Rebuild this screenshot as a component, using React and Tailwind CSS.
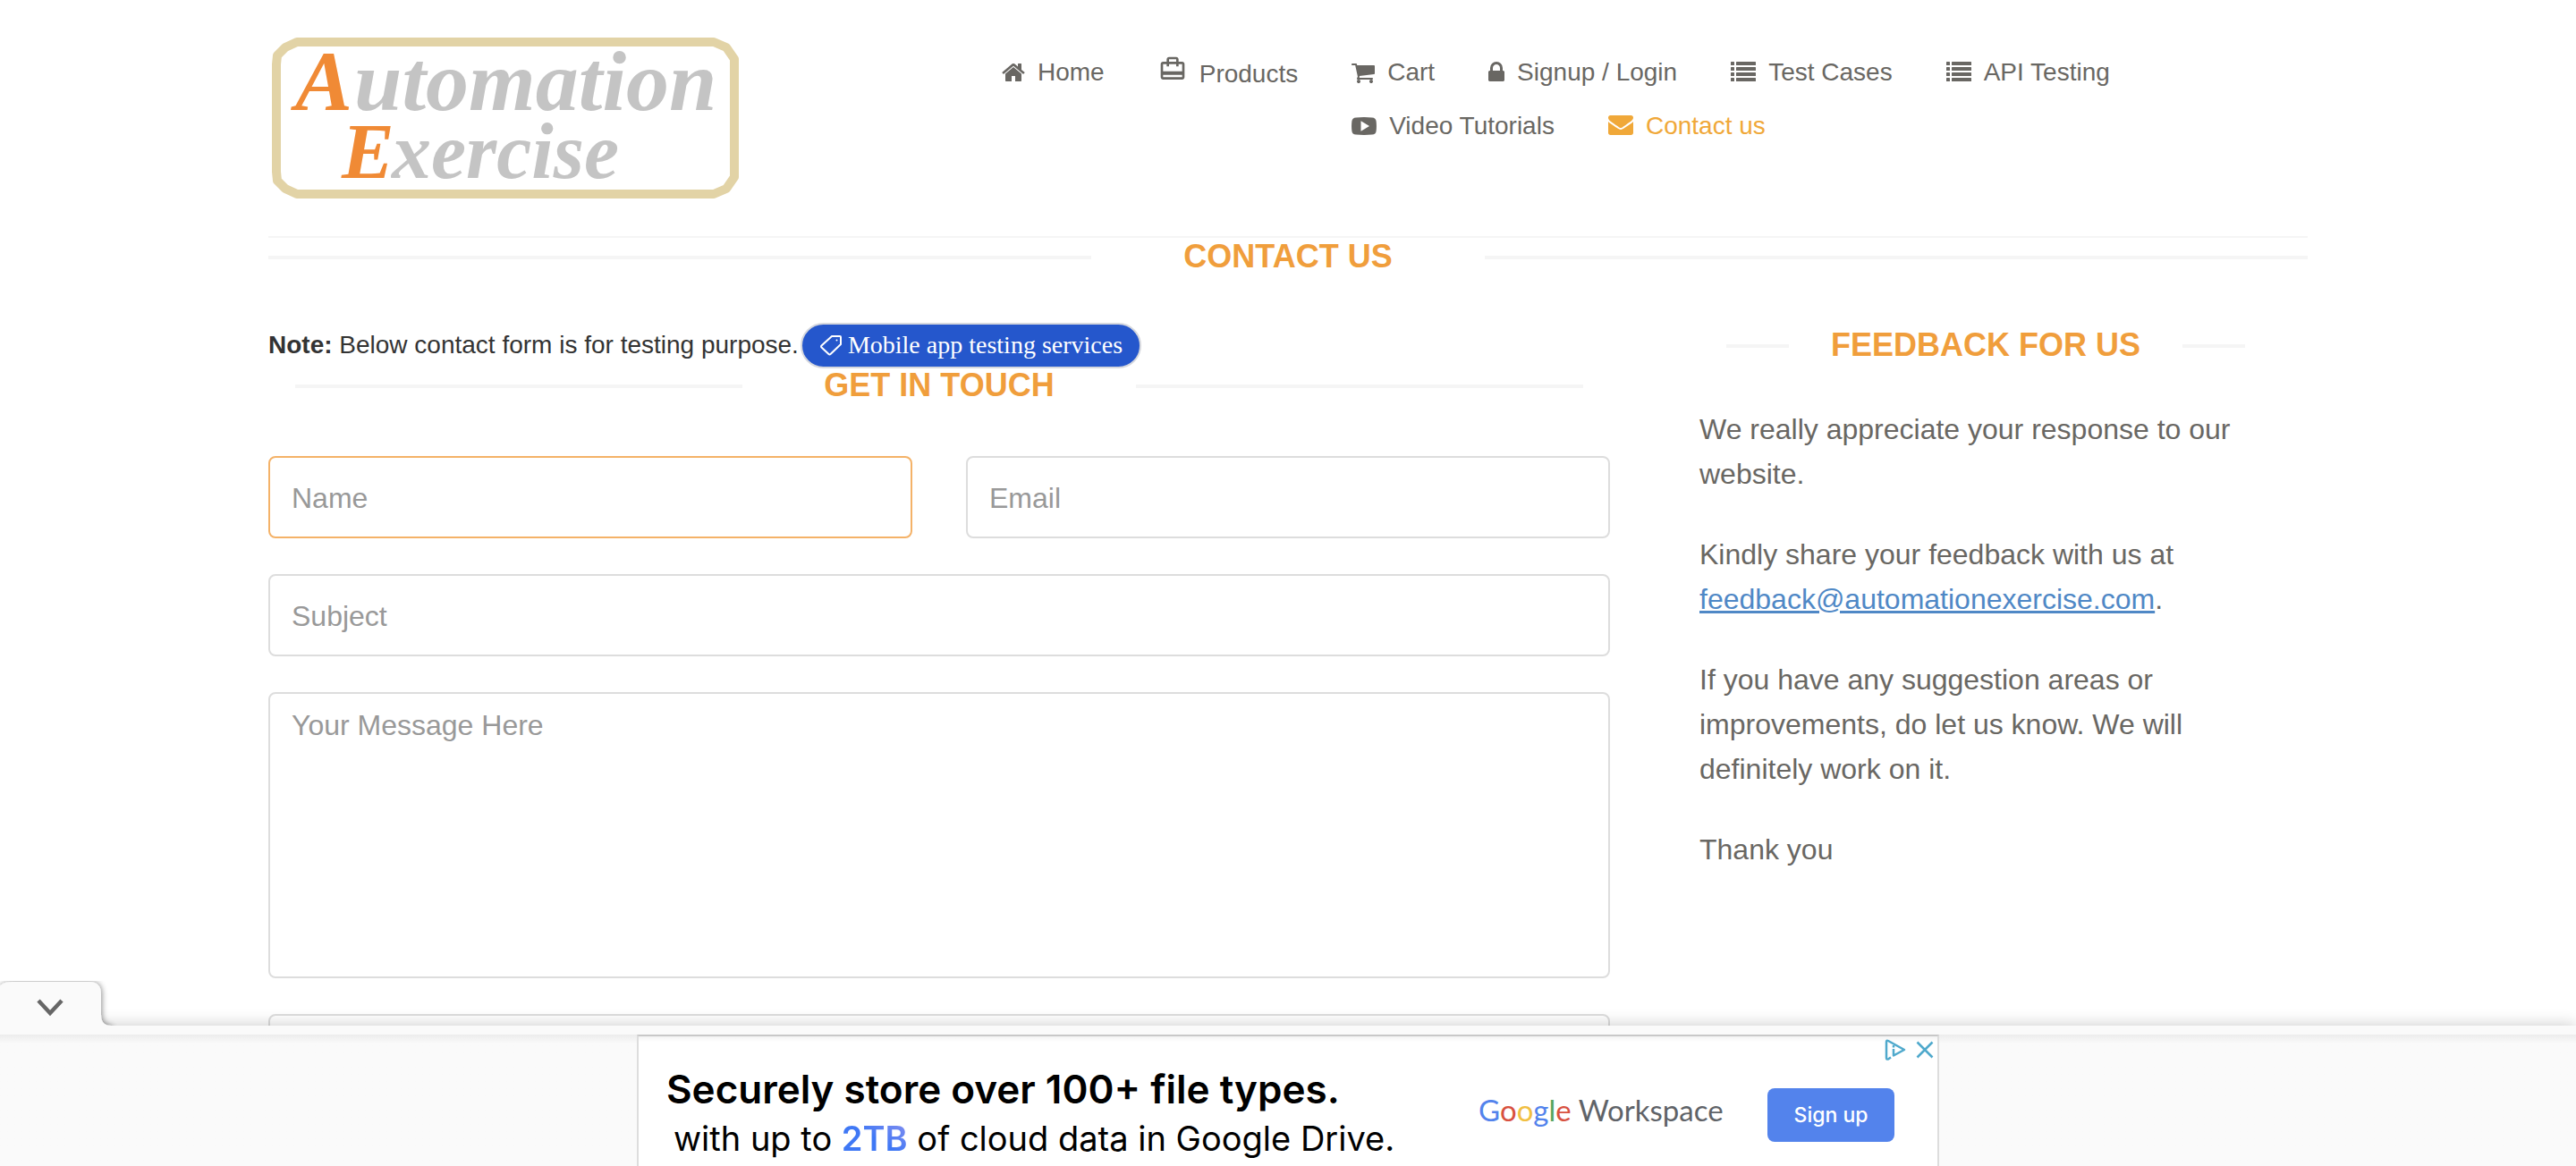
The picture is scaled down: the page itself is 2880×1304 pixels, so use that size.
import { MdOutlineCardTravel } from "react-icons/md";

const HomeIcon = () => (
  <svg viewBox="0 0 1664 1792" className="h-7 w-[26px]" fill="currentColor" aria-hidden="true">
    <path d="M1408 992v480q0 26-19 45t-45 19h-384v-384h-256v384h-384q-26 0-45-19t-19-45v-480q0-1 .5-3t.5-3l575-474 575 474q1 2 1 6zm223-69l-62 74q-8 9-21 11h-3q-13 0-21-7l-692-577-692 577q-12 8-24 7-13-2-21-11l-62-74q-8-10-7-23.5t11-21.5l719-599q32-26 76-26t76 26l244 204v-195q0-14 9-23t23-9h192q14 0 23 9t9 23v408l219 182q10 8 11 21.5t-7 23.5z" />
  </svg>
);

const CartIcon = () => (
  <svg viewBox="64 0 1664 1792" className="h-7 w-[26px]" fill="currentColor" aria-hidden="true">
    <path d="M704 1536q0 52-38 90t-90 38-90-38-38-90 38-90 90-38 90 38 38 90zm896 0q0 52-38 90t-90 38-90-38-38-90 38-90 90-38 90 38 38 90zm128-1088v512q0 24-16.5 42.5t-40.5 21.5l-1044 122q13 60 13 70 0 16-24 64h920q26 0 45 19t19 45-19 45-45 19h-1024q-26 0-45-19t-19-45q0-11 8-31.5t16-36 21.5-40 15.5-29.5l-177-823h-204q-26 0-45-19t-19-45 19-45 45-19h256q16 0 28.5 6.5t19.5 15.5 13 24.5 8 26 5.5 29.5 4.5 26h1201q26 0 45 19t19 45z" />
  </svg>
);

const LockIcon = () => (
  <svg viewBox="320 0 1152 1792" className="h-7 w-[18px]" fill="currentColor" aria-hidden="true">
    <path d="M640 768h512v-192q0-106-75-181t-181-75-181 75-75 181v192zm832 96v576q0 40-28 68t-68 28h-960q-40 0-68-28t-28-68v-576q0-40 28-68t68-28h32v-192q0-184 132-316t316-132 316 132 132 316v192h32q40 0 68 28t28 68z" />
  </svg>
);

const ListIcon = () => (
  <svg viewBox="0 0 28 28" className="size-7" fill="currentColor" aria-hidden="true">
    {[2, 8, 14, 20].map((y) => (
      <g key={y}>
        <rect x="0" y={y} width="4" height="4" rx="0.5" />
        <rect x="6" y={y} width="22" height="4" rx="0.5" />
      </g>
    ))}
  </svg>
);

const VideoIcon = () => (
  <svg viewBox="0 0 28 28" className="size-7" fill="currentColor" aria-hidden="true">
    <path fillRule="evenodd" d="M5 4.4Q14 3.6 23 4.4Q27.2 4.7 27.6 8.5Q28.300 14 27.600 19.500Q27.200 23.300 23 23.600Q14 24.400 5 23.600Q.8 23.300.4 19.500Q-.3 14 .4 8.500Q.8 4.700 5 4.400ZM10.500 8.200V19.800L20 14Z" />
  </svg>
);

const EnvelopeIcon = () => (
  <svg viewBox="0 128 1792 1792" className="size-7" fill="currentColor" aria-hidden="true">
    <path d="M1792 710v794q0 66-47 113t-113 47h-1472q-66 0-113-47t-47-113v-794q44 49 101 87 362 246 497 345 57 42 92.500 65.500t94.500 48 110 24.500h2q51 0 110-24.500t94.500-48 92.500-65.500q170-123 498-345 57-39 100-87zm0-294q0 79-49 151t-122 123q-376 261-468 325-10 7-42.500 31t-54 38.500-52 32.500-57.500 27-50 9h-2q-23 0-50-9t-57.500-27-52-32.500-54-38.500-42.500-31q-91-64-262-182.500t-205-142.500q-62-42-117-115.500t-55-136.500q0-78 41.500-130t118.500-52h1472q65 0 112.500 47t47.500 113z" />
  </svg>
);

function NavLink({ icon, children, active }) {
  return (
    <a href="#" className={`flex h-10 items-center gap-3.5 whitespace-nowrap ${active ? "text-[#f0a839]" : "text-[#696763]"}`}>
      {icon}
      {children}
    </a>
  );
}

function Logo() {
  return (
    <svg viewBox="0 0 522 180" className="h-[180px] w-[522px] overflow-visible" role="img" aria-label="Automation Exercise">
      <path d="M28 5H494L508 11L517 24V156L508 169L494 175H28L15 169L6 160L5 150V30L6 20L15 11Z" fill="none" stroke="#e2d3a6" strokeWidth="10" strokeLinejoin="round" />
      <g fontFamily="Liberation Serif, serif" fontStyle="italic" fontWeight="700">
        <text x="26" y="81" fill="#f08a35" fontSize="96">A</text>
        <text x="92" y="81" fill="#c4c4c4" fontSize="96">utomation</text>
        <text x="78" y="157" fill="#f08a35" fontSize="88">E</text>
        <text x="134" y="157" fill="#c4c4c4" fontSize="88">xercise</text>
      </g>
    </svg>
  );
}

function RuledTitle({ children }) {
  return (
    <h2 className="flex h-11 items-center text-[36px] leading-10 font-bold text-[#f09e3c]">
      <span className="h-1 flex-1 bg-[#f5f5f5]" />
      <span className="w-[440px] pb-0.5 text-center uppercase">{children}</span>
      <span className="h-1 flex-1 bg-[#f5f5f5]" />
    </h2>
  );
}

const field = "w-full rounded-lg border-2 bg-white px-6 text-[32px] text-[#555] placeholder:text-[#999] placeholder:opacity-100 outline-none";

function ContactForm() {
  return (
    <form className="mt-14 grid grid-cols-2 gap-x-[60px] gap-y-10">
      <input aria-label="Name" placeholder="Name" className={`${field} h-[92px] border-[#f4b268] pt-0.5`} />
      <input aria-label="Email" type="email" placeholder="Email" className={`${field} h-[92px] border-[#ddd] pt-0.5`} />
      <input aria-label="Subject" placeholder="Subject" className={`${field} col-span-2 h-[92px] border-[#ddd] pt-0.5`} />
      <textarea aria-label="Your Message Here" placeholder="Your Message Here" className={`${field} col-span-2 block h-[320px] resize-none border-[#ddd] py-3 leading-[46px]`} />
      <input aria-label="Upload file" type="file" className={`${field} col-span-2 h-[92px] border-[#ddd] py-5`} />
    </form>
  );
}

function AdBanner() {
  return (
    <aside aria-label="Advertisement" className="fixed inset-x-0 bottom-0 h-[157px] bg-[#fafafa] pt-2.5 shadow-[0_-2px_16px_rgba(0,0,0,0.18)]">
      <button aria-label="Collapse advertisement" className="absolute bottom-full left-0">
        <svg viewBox="0 0 136 50" className="block h-[50px] w-[136px]" aria-hidden="true">
          <defs>
            <filter id="tabShadow" x="-10%" y="-20%" width="120%" height="140%">
              <feDropShadow dx="1" dy="0" stdDeviation="3" floodColor="#000" floodOpacity="0.45" />
            </filter>
          </defs>
          <path d="M-4 56V14Q-2 1 14 1H100Q113 1 113 15V38Q113 50 124 50V56Z" fill="#fafafa" filter="url(#tabShadow)" />
          <path d="M43 22L56 36L69 22" fill="none" stroke="#666" strokeWidth="4.500" />
        </svg>
      </button>
      <div className="h-full bg-linear-to-b from-[#ececec] to-[#fafafa] to-[10px]">
        <div className="relative mx-auto flex h-full max-w-[1456px] items-start border-x-2 border-t-2 border-x-[#ddd] border-t-[#c8c8c8] bg-linear-to-b from-[#f3f3f3] to-white to-[6px] pl-[31px] font-[Inter,sans-serif] text-black">
          <div className="w-[908px] pt-[31px] whitespace-nowrap">
            <p className="text-[44px] leading-14 font-semibold">Securely store over 100+ file types.</p>
            <p className="pl-2 text-[38px] leading-[54px]">
              with up to{" "}
              <span className="bg-linear-to-tr from-[#3f78f5] from-50% to-[#8a90ee] bg-clip-text font-semibold text-transparent">2TB</span>{" "}
              of cloud data in Google Drive.
            </p>
          </div>
          <p className="w-[323px] pt-[62px] font-[Lato,sans-serif] text-[33px] leading-10 whitespace-nowrap text-[#5f6368]">
            <span className="text-[#5383ec]">G</span>
            <span className="text-[#d85140]">o</span>
            <span className="text-[#f1bf42]">o</span>
            <span className="text-[#5383ec]">g</span>
            <span className="text-[#58a55c]">l</span>
            <span className="text-[#d85140]">e</span> Workspace
          </p>
          <button className="mt-[58px] h-[60px] w-[142px] rounded-lg bg-[#5383ec] text-[23px] font-medium text-white">Sign up</button>
          <div className="absolute top-[3px] right-1 flex items-center gap-[11px] text-[#4fa9cc]">
            <a href="#" aria-label="AdChoices">
              <svg viewBox="0 0 24 24" className="size-6" fill="none" stroke="currentColor" strokeWidth="2.500" aria-hidden="true">
                <path d="M7 20.500L4 22.500Q2 23 2 21V3Q2 1 4 2L22 12L10 18.500V11" strokeLinejoin="round" />
                <path d="M10 7V9.500" />
              </svg>
            </a>
            <button aria-label="Close advertisement">
              <svg viewBox="0 0 20 20" className="block size-5" stroke="currentColor" strokeWidth="2.500" aria-hidden="true">
                <path d="M1.500 1.500L18.500 18.500M18.500 1.500L1.500 18.500" />
              </svg>
            </button>
          </div>
        </div>
      </div>
    </aside>
  );
}

export default function App() {
  return (
    <div className="h-screen overflow-hidden bg-white font-['Liberation_Sans',Arial,sans-serif] text-[28px] text-[#333]">
      <div className="mx-auto max-w-[2340px] px-[30px]">
        <header className="flex items-start border-b-2 border-[#f5f5f5] pb-[42px]">
          <a href="#" className="w-1/3 pt-[42px] pl-1">
            <Logo />
          </a>
          <nav className="flex gap-[60px] pt-[61px] pl-[60px]">
            <NavLink icon={<HomeIcon />}>Home</NavLink>
            <a href="#" className="flex h-11 items-center gap-3.5 text-[#696763]">
              <MdOutlineCardTravel className="mb-3 size-8" aria-hidden="true" />
              Products
            </a>
            <div className="flex flex-col gap-5">
              <div className="flex gap-[60px]">
                <NavLink icon={<CartIcon />}>Cart</NavLink>
                <NavLink icon={<LockIcon />}>Signup / Login</NavLink>
                <NavLink icon={<ListIcon />}>Test Cases</NavLink>
                <NavLink icon={<ListIcon />}>API Testing</NavLink>
              </div>
              <div className="flex gap-[60px]">
                <NavLink icon={<VideoIcon />}>Video Tutorials</NavLink>
                <NavLink icon={<EnvelopeIcon />} active>Contact us</NavLink>
              </div>
            </div>
          </nav>
        </header>

        <RuledTitle>Contact Us</RuledTitle>

        <main className="mt-[50px] grid grid-cols-[1500fr_680fr] gap-[100px]">
          <section>
            <div className="flex h-[50px] items-center pt-0.5 whitespace-nowrap">
              <p><b>Note:</b> Below contact form is for testing purpose.</p>
              <a href="#" className="ml-0.5 flex h-[51px] items-center gap-1.5 rounded-full border-2 border-[#d6d8de] bg-[#2557cc] px-[19px] font-['Liberation_Serif',serif] text-[28px] text-white">
                <svg viewBox="0 0 26 26" className="size-[26px]" fill="none" stroke="currentColor" strokeWidth="2" strokeLinejoin="round" aria-hidden="true">
                  <path d="M14 3H23Q24 3 24 4V12L12.500 23Q11.500 24 10.500 23L2.500 15.500Q1.500 14.500 2.500 13.500Z" />
                  <circle cx="19.500" cy="7.500" r="1" fill="currentColor" stroke="none" />
                </svg>
                Mobile app testing services
              </a>
            </div>
            <div className="px-[30px]">
              <RuledTitle>Get In Touch</RuledTitle>
            </div>
            <ContactForm />
          </section>

          <section className="pt-[5px] pr-10">
            <div className="px-[30px]">
              <RuledTitle>Feedback For Us</RuledTitle>
            </div>
            <address className="mt-[46px] flex flex-col gap-10 text-[32px] leading-[50px] text-[#696763] not-italic">
              <p>We really appreciate your response to our website.</p>
              <p>
                Kindly share your feedback with us at{" "}
                <a href="mailto:feedback@automationexercise.com" className="text-[#4f88c6] underline">feedback@automationexercise.com</a>.
              </p>
              <p>If you have any suggestion areas or improvements, do let us know. We will definitely work on it.</p>
              <p>Thank you</p>
            </address>
          </section>
        </main>
      </div>
      <AdBanner />
    </div>
  );
}
